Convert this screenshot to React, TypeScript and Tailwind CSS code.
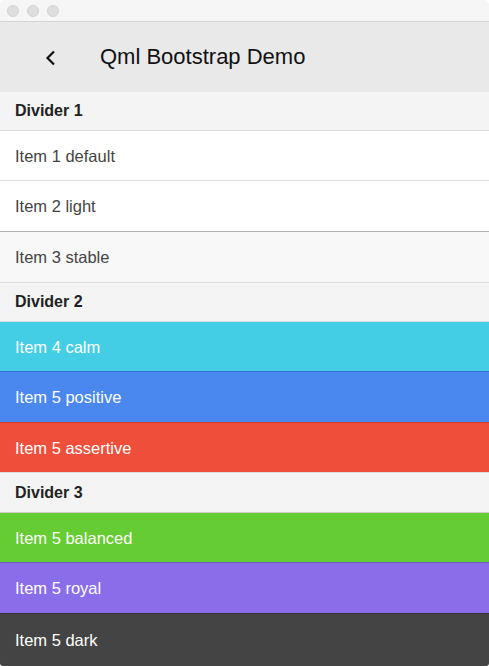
const FONT = '"Liberation Sans", Arial, sans-serif';

type Row =
  | { kind: 'divider'; label: string; h: string; border: string }
  | { kind: 'item'; label: string; h: string; border: string; bg: string; text: string };

// heights include the 1px top border
const ROWS: Row[] = [
  { kind: 'divider', label: 'Divider 1', h: 'h-[38px]', border: 'border-t-0' },
  { kind: 'item', label: 'Item 1 default', h: 'h-[50px]', border: 'border-[#dddddd]', bg: 'bg-white', text: 'text-[#444444]' },
  { kind: 'item', label: 'Item 2 light', h: 'h-[51px]', border: 'border-[#dddddd]', bg: 'bg-white', text: 'text-[#444444]' },
  { kind: 'item', label: 'Item 3 stable', h: 'h-[51px]', border: 'border-[#b2b2b2]', bg: 'bg-[#f8f8f8]', text: 'text-[#444444]' },
  { kind: 'divider', label: 'Divider 2', h: 'h-[39px]', border: 'border-[#dddddd]' },
  { kind: 'item', label: 'Item 4 calm', h: 'h-[50px]', border: 'border-[#cfdde0]', bg: 'bg-[#43cee6]', text: 'text-white' },
  { kind: 'item', label: 'Item 5 positive', h: 'h-[51px]', border: 'border-[#3570d8]', bg: 'bg-[#4a87ee]', text: 'text-white' },
  { kind: 'item', label: 'Item 5 assertive', h: 'h-[50px]', border: 'border-[#d83c2a]', bg: 'bg-[#ef4e3a]', text: 'text-white' },
  { kind: 'divider', label: 'Divider 3', h: 'h-[40px]', border: 'border-[#dddddd]' },
  { kind: 'item', label: 'Item 5 balanced', h: 'h-[50px]', border: 'border-[#cfcfcf]', bg: 'bg-[#66cc33]', text: 'text-white' },
  { kind: 'item', label: 'Item 5 royal', h: 'h-[51px]', border: 'border-[#6d58c8]', bg: 'bg-[#8a6de9]', text: 'text-white' },
  { kind: 'item', label: 'Item 5 dark', h: 'h-[53px]', border: 'border-[#333333]', bg: 'bg-[#444444]', text: 'text-white' },
];

function TrafficLights() {
  return (
    <div className="flex items-center gap-[8px] pl-[7px]">
      {[0, 1, 2].map((i) => (
        <span
          key={i}
          className="block w-[12px] h-[12px] rounded-full bg-[#dedede] border border-[#d2d2d2]"
        />
      ))}
    </div>
  );
}

export default function App() {
  return (
    <div className="w-[489px] h-[666px] bg-white" style={{ fontFamily: FONT }}>
      <div className="w-full h-full flex flex-col overflow-hidden rounded-t-[5px] rounded-b-[3px]">
        {/* Window title bar */}
        <div className="h-[22px] shrink-0 flex items-center bg-[#f6f6f6] border-b border-[#d4d4d4]">
          <TrafficLights />
        </div>

        {/* Header */}
        <div className="h-[70px] shrink-0 flex items-center bg-[#e9e9e9]">
          <div className="w-[100px] flex justify-center pl-[1px] pt-[2px]">
            <svg width="14" height="16" viewBox="0 0 14 16" fill="none">
              <path d="M10 1.5 L3.5 8 L10 14.5" stroke="#111" strokeWidth="2.2" strokeLinecap="butt" strokeLinejoin="miter" />
            </svg>
          </div>
          <span className="text-[22px] text-[#111] leading-none">Qml Bootstrap Demo</span>
        </div>

        {/* List */}
        <div className="flex flex-col">
          {ROWS.map((row) =>
            row.kind === 'divider' ? (
              <div
                key={row.label}
                className={`${row.h} shrink-0 flex items-center px-[15px] bg-[#f4f4f4] border-t ${row.border} text-[16px] font-bold text-[#222222]`}
              >
                {row.label}
              </div>
            ) : (
              <div
                key={row.label}
                className={`${row.h} shrink-0 flex items-center px-[15px] pt-[1px] border-t ${row.border} ${row.bg} ${row.text} text-[16.5px]`}
              >
                {row.label}
              </div>
            ),
          )}
        </div>
      </div>
    </div>
  );
}
